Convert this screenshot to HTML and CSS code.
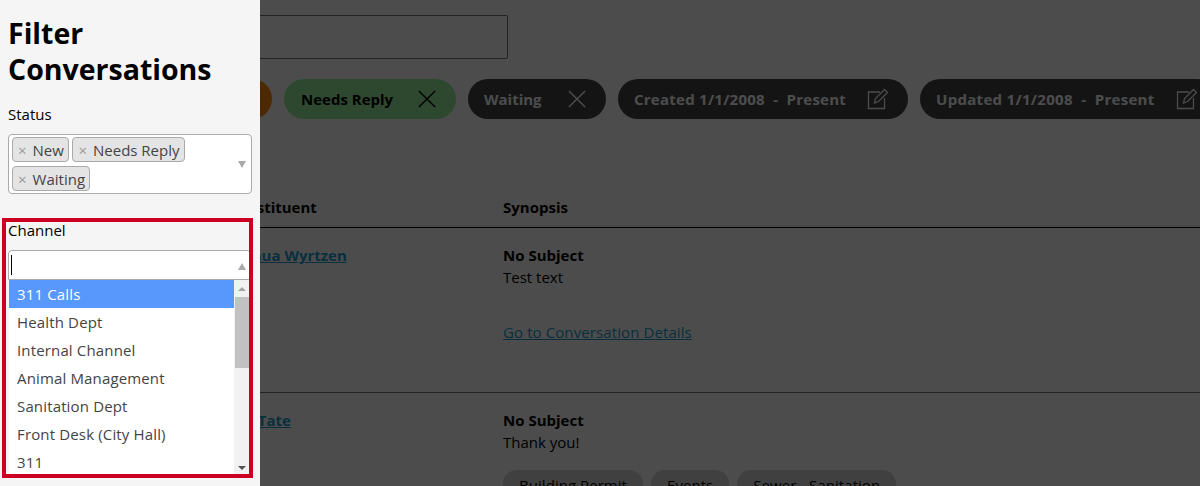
FILE: index.html
```html
<!DOCTYPE html>
<html lang="en">
<head>
    <meta charset="UTF-8">
    <meta name="viewport" content="width=device-width, initial-scale=1.0">
    <title>Conversations</title>
    <link rel="stylesheet" href="styles.css">
</head>
<body>

    <!-- Page behind the drawer -->
    <main class="page">
        <div class="search-box"></div>

        <div class="chip-row">
            <div class="chip chip-new"><span>New</span></div>
            <div class="chip chip-reply">
                <span>Needs Reply</span>
                <svg class="chip-icon" viewBox="0 0 20 20"><path d="M1 1 L19 19 M19 1 L1 19"/></svg>
            </div>
            <div class="chip chip-dark chip-waiting">
                <span>Waiting</span>
                <svg class="chip-icon" viewBox="0 0 20 20"><path d="M1 1 L19 19 M19 1 L1 19"/></svg>
            </div>
            <div class="chip chip-dark chip-created">
                <span>Created 1/1/2008&nbsp; - &nbsp;Present</span>
                <svg class="edit-icon" viewBox="0 0 22 22"><path d="M13 4 H1.5 V20.5 H17.5 V10 M7.5 15 L8.5 10.5 L17.5 1.5 L20.5 4.5 L11.5 13.5 Z"/></svg>
            </div>
            <div class="chip chip-dark chip-updated">
                <span>Updated 1/1/2008&nbsp; - &nbsp;Present</span>
                <svg class="edit-icon" viewBox="0 0 22 22"><path d="M13 4 H1.5 V20.5 H17.5 V10 M7.5 15 L8.5 10.5 L17.5 1.5 L20.5 4.5 L11.5 13.5 Z"/></svg>
            </div>
        </div>

        <div class="table-head">
            <div class="col-name">Constituent</div>
            <div>Synopsis</div>
        </div>

        <div class="table-row">
            <div class="col-name"><a href="#">Joshua Wyrtzen</a></div>
            <div>
                <div class="subject">No Subject</div>
                <div>Test text</div>
                <a class="details" href="#">Go to Conversation Details</a>
            </div>
        </div>

        <div class="table-row">
            <div class="col-name"><a href="#">Ian Tate</a></div>
            <div>
                <div class="subject">No Subject</div>
                <div>Thank you!</div>
                <div class="tags">
                    <span class="tag">Building Permit</span>
                    <span class="tag">Events</span>
                    <span class="tag">Sewer - Sanitation</span>
                </div>
            </div>
        </div>
    </main>

    <div class="backdrop"></div>

    <!-- Filter drawer -->
    <aside class="drawer">
        <h1>Filter Conversations</h1>

        <label class="field-label">Status</label>
        <div class="multi-select">
            <div class="pills">
                <span class="pill"><i>×</i>New</span>
                <span class="pill"><i>×</i>Needs Reply</span>
                <span class="pill"><i>×</i>Waiting</span>
            </div>
            <span class="arrow-down"></span>
        </div>

        <div class="channel-group">
            <label class="field-label">Channel</label>
            <div class="channel-input">
                <span class="caret"></span>
                <span class="arrow-up"></span>
            </div>
            <div class="dropdown">
                <ul class="options">
                    <li class="active">311 Calls</li>
                    <li>Health Dept</li>
                    <li>Internal Channel</li>
                    <li>Animal Management</li>
                    <li>Sanitation Dept</li>
                    <li>Front Desk (City Hall)</li>
                    <li>311</li>
                </ul>
                <div class="scrollbar">
                    <span class="scroll-up"></span>
                    <span class="scroll-thumb"></span>
                    <span class="scroll-down"></span>
                </div>
            </div>
        </div>
    </aside>

</body>
</html>
```

FILE: styles.css
```css
body {
    margin: 0;
    height: 486px;
    overflow: hidden;
    background-color: white;
    font-family: 'Open Sans', 'Noto Sans', sans-serif;
    font-size: 15px;
    color: black;
}

/* Page behind the drawer */
.page {
    padding: 15px 0 0 0;
    height: 471px;
    overflow: hidden;
}

.search-box {
    width: 506px;
    height: 42px;
    border: 1px solid #777;
    border-radius: 2px;
}

.chip-row {
    display: flex;
    gap: 12px;
    margin-top: 20px;
    margin-left: 120px;
    white-space: nowrap;
}

.chip {
    display: flex;
    align-items: center;
    justify-content: space-between;
    flex: none;
    height: 40px;
    padding: 0 17px;
    border-radius: 20px;
    font-weight: 700;
    box-sizing: border-box;
}

.chip-new {
    width: 152px;
    background-color: #ff8a00;
}

.chip-reply {
    width: 172px;
    background-color: #9cf0a0;
}

.chip-dark {
    padding-left: 16px;
    background-color: #444;
    color: white;
}

.chip-waiting {
    width: 138px;
}

.chip-created {
    width: 290px;
    letter-spacing: 0.25px;
}

.chip-updated {
    width: 297px;
    letter-spacing: 0.3px;
}

.chip-icon {
    width: 18px;
    height: 18px;
    margin-right: 3px;
    fill: none;
    stroke: currentColor;
    stroke-width: 1.6;
}

.edit-icon {
    width: 22px;
    height: 22px;
    margin-right: 2px;
    fill: none;
    stroke: currentColor;
    stroke-width: 1.3;
}

.table-head,
.table-row {
    display: grid;
    grid-template-columns: 503px 1fr;
}

.table-head {
    margin-top: 78px;
    height: 31px;
    font-weight: 700;
    line-height: 20px;
    border-bottom: 1px solid black;
    box-sizing: border-box;
}

.table-row {
    height: 165px;
    padding-top: 16px;
    box-sizing: border-box;
    border-bottom: 1px solid #777;
    line-height: 22px;
}

.col-name {
    padding-left: 228px;
}

.col-name a {
    position: relative;
    left: 2px;
    color: #1f9fd0;
    font-weight: 700;
}

.subject {
    font-weight: 700;
}

.details {
    display: block;
    margin-top: 33px;
    letter-spacing: 0.1px;
    color: #1f9fd0;
}

.tags {
    display: flex;
    gap: 8px;
    margin-top: 17px;
}

.tag {
    padding: 4px 16px;
    border-radius: 14px;
    letter-spacing: 0.05px;
    background-color: #d6d6d6;
}

.backdrop {
    position: absolute;
    inset: 0;
    background-color: rgba(0, 0, 0, 0.7);
}

/* Filter drawer */
.drawer {
    position: absolute;
    top: 0;
    left: 0;
    bottom: 0;
    width: 260px;
    padding: 15px 8px 0 8px;
    box-sizing: border-box;
    background-color: #f5f5f5;
}

h1 {
    margin: 0 0 17px 0;
    font-size: 28.5px;
    font-weight: 700;
    line-height: 36px;
}

.field-label {
    display: block;
    height: 20px;
    line-height: 20px;
    font-size: 15px;
}

.multi-select {
    display: flex;
    align-items: center;
    margin-top: 10px;
    height: 60px;
    box-sizing: border-box;
    border: 1px solid #aaa;
    border-radius: 4px;
    background-color: white;
    padding: 0 5px 0 3px;
}

.pills {
    flex: 1;
    display: flex;
    flex-wrap: wrap;
    gap: 4px 3.5px;
}

.pill {
    height: 25px;
    line-height: 25px;
    padding: 0 4px;
    box-sizing: border-box;
    border: 1px solid #aaa;
    border-radius: 4px;
    background-color: #e4e4e4;
    color: #444;
}

.pill i {
    margin: 0 6px 0 1px;
    font-style: normal;
    color: #999;
}

.arrow-down {
    width: 0;
    height: 0;
    border-left: 4px solid transparent;
    border-right: 4px solid transparent;
    border-top: 7px solid #aaa;
}

.channel-group {
    height: 260px;
    margin: 24px -1px 0 -6px;
    padding: 0 0 0 2px;
    box-sizing: border-box;
    border: 4px solid #cc0022;
    overflow: hidden;
}

.channel-group .field-label {
    margin-top: -2px;
}

.channel-input {
    display: flex;
    align-items: center;
    justify-content: space-between;
    width: 243px;
    height: 30px;
    margin-top: 10px;
    padding: 0 3px 0 2px;
    box-sizing: border-box;
    border: 1px solid #aaa;
    border-radius: 4px 4px 0 0;
    background-color: white;
}

.caret {
    width: 1px;
    height: 20px;
    background-color: black;
}

.arrow-up {
    position: relative;
    left: -1px;
    top: 1px;
    width: 0;
    height: 0;
    border-left: 4px solid transparent;
    border-right: 4px solid transparent;
    border-bottom: 7px solid #aaa;
}

.dropdown {
    display: flex;
    width: 240px;
    height: 196px;
    margin-left: 1px;
    background-color: white;
}

.options {
    flex: 1;
    margin: 0;
    padding: 0;
    list-style: none;
    letter-spacing: 0.15px;
    color: #444;
}

.options li {
    height: 28px;
    line-height: 28px;
    padding-left: 8px;
}

.options .active {
    background-color: #5897fb;
    color: white;
}

.scrollbar {
    display: flex;
    flex-direction: column;
    align-items: center;
    width: 15px;
    height: 195px;
    background-color: #f1f1f1;
    position: relative;
}

.scroll-up {
    margin-top: 7px;
    border-left: 4px solid transparent;
    border-right: 4px solid transparent;
    border-bottom: 4px solid #a3a3a3;
}

.scroll-thumb {
    width: 14px;
    height: 71px;
    margin-top: 6px;
    margin-left: 1px;
    background-color: #c1c1c1;
}

.scroll-down {
    position: absolute;
    bottom: 5px;
    border-left: 4px solid transparent;
    border-right: 4px solid transparent;
    border-top: 4px solid #505050;
}
```
